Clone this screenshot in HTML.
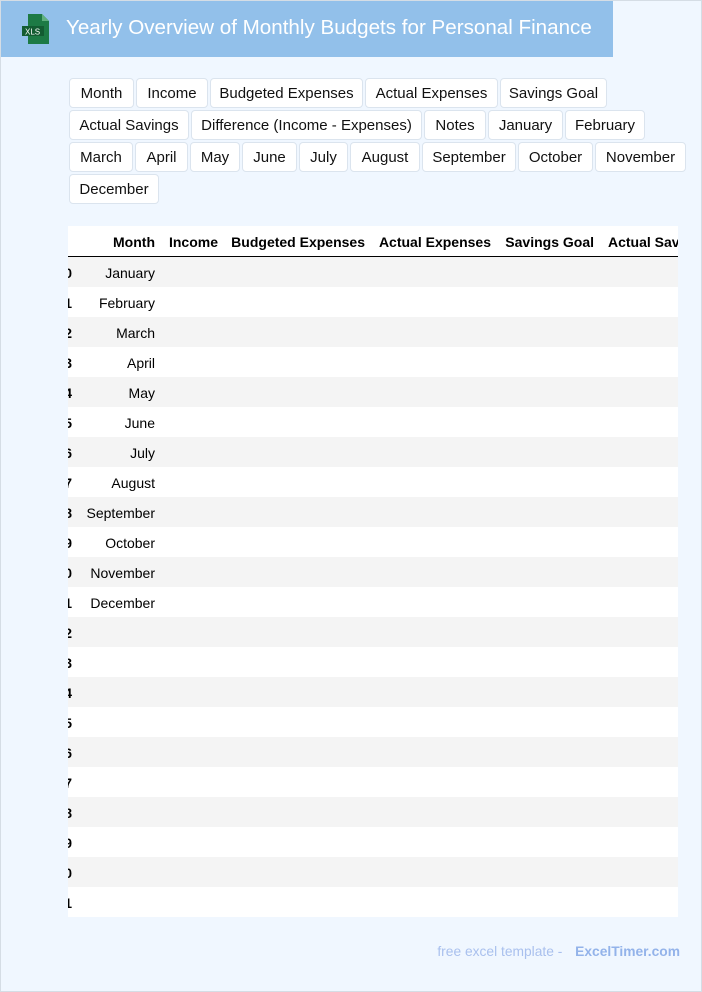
<!DOCTYPE html>
<html><head><meta charset="utf-8"><style>
*{box-sizing:border-box;margin:0;padding:0}
body{width:702px;height:992px;background:#f0f7ff;font-family:"Liberation Sans",Arial,sans-serif;position:relative;overflow:hidden}
.bd{position:absolute;left:0;top:0;width:702px;height:992px;border:1px solid #d5dde5;pointer-events:none}
.hdr{position:absolute;left:0;top:0;width:613px;height:57px;background:#92c0ea}
.hdr h1{position:absolute;left:66px;top:16px;font-size:20.6px;font-weight:normal;color:#fff;white-space:nowrap}
.b{position:absolute;height:30px;background:#fff;border:1px solid #dbe4ee;border-radius:4px;font-size:15px;line-height:30px;text-align:center;color:#111;white-space:nowrap}
.tw{position:absolute;left:68px;top:226px;width:610px;height:691px;overflow:hidden;background:#fff}
.c{position:absolute;white-space:nowrap;font-size:14px;text-align:right}
.h{font-weight:bold;top:8px}
.r{position:absolute;left:0;width:610px;height:30px}
.r.g{background:#f4f4f4}
.ft{position:absolute;right:22px;top:944px;font-size:13.8px;color:#a9c0ee}
.ft b{color:#93b3ea;margin-left:9px}
</style></head><body>
<div class="hdr">
<svg style="position:absolute;left:22px;top:14px" width="28" height="30" viewBox="0 0 28 30"><path d="M6 0h14l7 7v23H6z" fill="#1d7a45"/><path d="M20 0v7h7z" fill="#5fb07e"/><rect x="0" y="12" width="22" height="10" fill="#135c32"/><text x="3" y="20.5" font-size="8" fill="#fff" font-family="Liberation Sans">XLS</text></svg>
<h1>Yearly Overview of Monthly Budgets for Personal Finance</h1></div>

<div class="b" style="left:69px;top:78px;width:65px">Month</div>
<div class="b" style="left:136px;top:78px;width:72px">Income</div>
<div class="b" style="left:210px;top:78px;width:153px">Budgeted Expenses</div>
<div class="b" style="left:365px;top:78px;width:133px">Actual Expenses</div>
<div class="b" style="left:500px;top:78px;width:107px">Savings Goal</div>
<div class="b" style="left:69px;top:110px;width:120px">Actual Savings</div>
<div class="b" style="left:191px;top:110px;width:231px">Difference (Income - Expenses)</div>
<div class="b" style="left:424px;top:110px;width:62px">Notes</div>
<div class="b" style="left:488px;top:110px;width:75px">January</div>
<div class="b" style="left:565px;top:110px;width:80px">February</div>
<div class="b" style="left:69px;top:142px;width:64px">March</div>
<div class="b" style="left:135px;top:142px;width:53px">April</div>
<div class="b" style="left:190px;top:142px;width:50px">May</div>
<div class="b" style="left:242px;top:142px;width:55px">June</div>
<div class="b" style="left:299px;top:142px;width:49px">July</div>
<div class="b" style="left:350px;top:142px;width:70px">August</div>
<div class="b" style="left:422px;top:142px;width:94px">September</div>
<div class="b" style="left:518px;top:142px;width:75px">October</div>
<div class="b" style="left:595px;top:142px;width:91px">November</div>
<div class="b" style="left:69px;top:174px;width:90px">December</div>

<div class="tw">
<div class="c h" style="right:523px">Month</div>
<div class="c h" style="right:460px">Income</div>
<div class="c h" style="right:313px">Budgeted Expenses</div>
<div class="c h" style="right:187px">Actual Expenses</div>
<div class="c h" style="right:84px">Savings Goal</div>
<div class="c h" style="left:540px;text-align:left">Actual Savings</div>
<div style="position:absolute;left:0;top:30px;width:610px;height:1px;background:#000"></div>
<div id="rows"></div>
</div>
<div class="ft">free excel template - <b>ExcelTimer.com</b></div>
<div class="bd"></div>
<script>
var m=["January","February","March","April","May","June","July","August","September","October","November","December"];
var h="";
for(var i=0;i<22;i++){
h+='<div class="r'+(i%2==0?' g':'')+'" style="top:'+(31+i*30)+'px">'+
'<div class="c" style="right:606px;top:8px;font-weight:bold">'+i+'</div>'+
(i<12?'<div class="c" style="right:523px;top:8px">'+m[i]+'</div>':'')+'</div>';
}
document.getElementById("rows").innerHTML=h;
</script>
</body></html>
